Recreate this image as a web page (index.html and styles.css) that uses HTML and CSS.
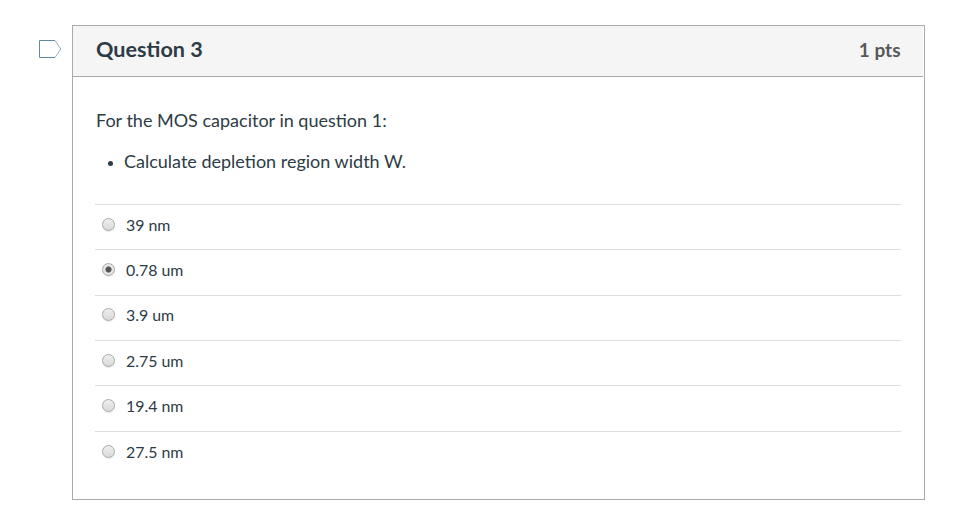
FILE: index.html
```html
<!DOCTYPE html>
<html lang="en">
<head>
<meta charset="utf-8">
<title>Question 3</title>
<link rel="stylesheet" href="styles.css">
</head>
<body>
<main class="page">
  <svg class="flag" width="24" height="20" viewBox="0 0 24 20"><path class="flag-edge" d="M17 1.5L22.8 10L17 18.5"/><path d="M17 1.5H1.5V18.5H17"/></svg>
  <section class="question">
    <header class="head"><h2 class="title">Question 3</h2><span class="points">1 pts</span></header>
    <div class="body">
      <p class="prompt">For the MOS capacitor in question 1:</p>
      <ul class="tasks"><li>Calculate depletion region width W.</li></ul>
      <div class="answers">
        <div class="answer"><span class="radio"></span><span>39 nm</span></div>
        <div class="answer"><span class="radio checked"></span><span>0.78 um</span></div>
        <div class="answer"><span class="radio"></span><span>3.9 um</span></div>
        <div class="answer"><span class="radio"></span><span>2.75 um</span></div>
        <div class="answer"><span class="radio"></span><span>19.4 nm</span></div>
        <div class="answer"><span class="radio"></span><span>27.5 nm</span></div>
      </div>
    </div>
  </section>
</main>
</body>
</html>
```
FILE: styles.css
```css
* { box-sizing: border-box; }
body { margin: 0; background: #fff; color: #2d3b45; font-family: Lato, sans-serif; }
.page { display: flex; align-items: flex-start; padding: 25px 32px 0 38px; }
.flag { flex: none; margin: 14px 10px 0 0; fill: none; stroke: #5f8aa6; stroke-width: 1; }
.flag-edge { stroke: #8fb0c4; }
.question { width: 853px; height: 475px; border: 1px solid #aaa; }
.head { display: flex; justify-content: space-between; align-items: center; height: 51px; margin-right: 1px; padding: 0 22.5px 3px 23px; background: #f5f5f5; border-bottom: 1px solid #aaa; }
.title { margin: 0 0 2px; font-size: 21.6px; line-height: 30px; font-weight: 700; }
.points { font-size: 19px; line-height: 24px; font-weight: 700; color: #595959; }
.body { padding: 30px 23px 0 22px; }
.prompt { margin: 0 0 14px 1px; font-size: 18px; line-height: 27px; }
.tasks { margin: 0 0 29px; padding-left: 13px; font-size: 18px; line-height: 27px; list-style: none; }
.tasks li { display: flex; align-items: center; }
.tasks li::before { content: ""; width: 5px; height: 5px; margin: 3px 11px 0 0; border-radius: 50%; background: currentColor; }
.answer { display: flex; align-items: flex-start; height: 45.36px; padding: 11.77px 0 0 7px; border-top: 1px solid #ddd; font-size: 15.9px; line-height: 16px; }
.radio { width: 13px; height: 13px; margin: 1px 11px 0 0; border: 1px solid #aaa; border-radius: 50%; background: linear-gradient(#eee, #dadada); box-shadow: 0 1px 1px #e8e8e8; }
.checked { background: radial-gradient(circle, #555 0 2.6px, #e6e6e6 3.5px); }
```
